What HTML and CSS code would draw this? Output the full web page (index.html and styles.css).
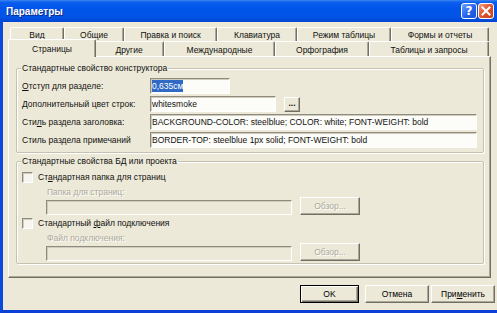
FILE: index.html
```html
<!DOCTYPE html>
<html lang="ru">
<head>
<meta charset="utf-8">
<title>Параметры</title>
<link rel="stylesheet" href="styles.css">
</head>
<body>
<div class="titlebar">
  <span class="title">Параметры</span>
  <div class="tb-buttons">
    <span class="tb-btn help">?</span>
    <span class="tb-btn close"><svg width="10" height="10" viewBox="0 0 10 10"><path d="M1.5 1.5 L8.5 8.5 M8.5 1.5 L1.5 8.5" stroke="#fff" stroke-width="2" stroke-linecap="square"/></svg></span>
  </div>
</div>
<div class="frame">
  <div class="tabs">
    <div class="tabrow back">
      <div class="tab w54">Вид</div>
      <div class="tab w60">Общие</div>
      <div class="tab w93">Правка и поиск</div>
      <div class="tab w80">Клавиатура</div>
      <div class="tab w94">Режим таблицы</div>
      <div class="tab w98">Формы и отчеты</div>
    </div>
    <div class="tabrow front">
      <div class="tab active w84">Страницы</div>
      <div class="tab w70">Другие</div>
      <div class="tab w111">Международные</div>
      <div class="tab w94">Орфография</div>
      <div class="tab w120">Таблицы и запросы</div>
    </div>
  </div>
  <div class="panel">
    <div class="group">
      <div class="group-title">Стандартные свойство конструктора</div>
      <div class="field first">
        <span class="lbl"><u>О</u>тступ для разделе:</span>
        <div class="edit e80"><span class="sel">0,635см</span></div>
      </div>
      <div class="field">
        <span class="lbl"><u>Д</u>ополнительный цвет строк:</span>
        <div class="edit e126">whitesmoke</div>
        <span class="btn dots">...</span>
      </div>
      <div class="field">
        <span class="lbl">Сти<u>л</u>ь раздела заголовка:</span>
        <div class="edit e327">BACKGROUND-COLOR: steelblue; COLOR: white; FONT-WEIGHT: bold</div>
      </div>
      <div class="field">
        <span class="lbl">Стиль раздела примечаний</span>
        <div class="edit e327">BORDER-TOP: steelblue 1px solid; FONT-WEIGHT: bold</div>
      </div>
    </div>
    <div class="group second">
      <div class="group-title">Стандартные свойства БД или проекта</div>
      <div class="check first">
        <span class="box"></span>
        <span>Ст<u>а</u>ндартная папка для страниц</span>
      </div>
      <div class="pathrow">
        <div class="pathcol">
          <span class="dis-lbl">Папка для страниц:</span>
          <div class="edit disabled e246"></div>
        </div>
        <span class="btn browse disabled-btn">Обзор...</span>
      </div>
      <div class="check">
        <span class="box"></span>
        <span>Стандартный <u>ф</u>айл подключения</span>
      </div>
      <div class="pathrow">
        <div class="pathcol">
          <span class="dis-lbl">Файл подключения:</span>
          <div class="edit disabled e246"></div>
        </div>
        <span class="btn browse disabled-btn">Обзор...</span>
      </div>
    </div>
  </div>
  <div class="footer">
    <span class="btn dlg default">OK</span>
    <span class="btn dlg cancel">Отмена</span>
    <span class="btn dlg apply">При<u>м</u>енить</span>
  </div>
</div>
</body>
</html>
```
FILE: styles.css
```css
* { box-sizing: border-box; }
html, body {
  margin: 0;
  padding: 0;
  width: 497px;
  height: 313px;
  overflow: hidden;
  background: #ECE9D8;
  font-family: "Liberation Sans", Arial, sans-serif;
  font-size: 8.5px;
  color: #000;
}
u { text-decoration: underline; text-underline-offset: 1px; }

.titlebar {
  height: 22px;
  display: flex;
  align-items: center;
  justify-content: space-between;
  padding: 0 3px 0 6px;
  background: linear-gradient(180deg, #3A86F4 0%, #0C5EEC 10%, #0055EA 35%, #0254E6 75%, #0046D4 100%);
}
.title {
  color: #fff;
  font-weight: bold;
  font-size: 10px;
  text-shadow: 1px 1px 0 #0A2A8A;
}
.tb-buttons { display: flex; gap: 1px; align-self: flex-start; margin-top: 3px; }
.tb-btn {
  width: 16px;
  height: 16px;
  border: 1px solid #fff;
  border-radius: 3px;
  display: flex;
  align-items: center;
  justify-content: center;
}
.help {
  background: linear-gradient(135deg, #6FA3FF, #2661EB 55%, #1A4FD8);
  color: #fff;
  font-weight: bold;
  font-size: 12px;
  font-family: "DejaVu Sans", sans-serif;
}
.close {
  background: linear-gradient(135deg, #F3A08A, #E2562F 45%, #C8401C);
}

.frame {
  height: 291px;
  border-left: 3px solid #0A4BDD;
  border-bottom: 3px solid #0B3FD6;
  padding: 5px 2px 0 5px;
  display: flex;
  flex-direction: column;
}

.tabs { margin: 0 6px 0 2px; height: 29px; }
.tabrow { display: flex; }
.tab {
  flex: none;
  display: flex;
  align-items: center;
  justify-content: center;
  background: #ECE9D8;
  border-top: 1px solid #fff;
  border-left: 1px solid #fff;
  border-right: 1px solid #716F64;
  box-shadow: inset -1px 0 0 #ACA899;
  border-radius: 2px 2px 0 0;
  white-space: nowrap;
  color: #111;
}
.back .tab { height: 14px; padding-top: 1px; }
.front .tab { height: 15px; padding-top: 1px; }
.tab.active {
  height: 18px;
  margin: -2px -2px 0 -2px;
  width: 88px;
  position: relative;
  z-index: 1;
  padding-top: 0;
}
.w54 { width: 54px; }
.w60 { width: 60px; }
.w70 { width: 70px; }
.w80 { width: 80px; }
.w84 { width: 84px; }
.w93 { width: 93px; }
.w94 { width: 94px; }
.w98 { width: 98px; }
.w111 { width: 111px; }
.w120 { width: 120px; }

.panel {
  height: 222px;
  margin-right: 4px;
  border-top: 1px solid #fff;
  border-left: 1px solid #fff;
  border-right: 1px solid #716F64;
  border-bottom: 1px solid #716F64;
  box-shadow: inset -1px -1px 0 #ACA899;
  padding: 11px 6px 0 7px;
}

.group {
  border: 1px solid #C5C2B2;
  border-radius: 2px;
  box-shadow: 1px 1px 0 #fff, inset 1px 1px 0 #fff;
  padding: 0 5px 3px 5px;
}
.group.second { margin-top: 8px; padding-bottom: 2px; }
.group-title {
  margin: -6px 0 0 -1px;
  height: 11px;
  line-height: 11px;
  padding: 0 1px;
  width: fit-content;
  background: #ECE9D8;
  color: #111;
}

.field { height: 18px; display: flex; align-items: center; color: #111; }
.field.first { margin-top: 3px; }
.lbl { width: 128px; flex: none; white-space: nowrap; }
.edit {
  height: 16px;
  line-height: 14px;
  padding: 0 1px;
  background: #FCFCF8;
  border: 1px solid;
  border-color: #8F8C7D #fff #fff #8F8C7D;
  box-shadow: inset 1px 1px 0 #CFCCBE;
  white-space: nowrap;
  overflow: hidden;
}
.e80 { width: 80px; }
.e126 { width: 126px; }
.e327 { width: 327px; }
.e246 { width: 246px; height: 15px; }
.edit.disabled { background: #ECE9D8; }
.sel { background: #316AC5; color: #fff; padding: 1px 0; }

.btn {
  display: flex;
  align-items: center;
  justify-content: center;
  background: #ECE9D8;
  border: 1px solid;
  border-color: #fff #716F64 #716F64 #fff;
  box-shadow: inset -1px -1px 0 #ACA899;
  white-space: nowrap;
}
.dots {
  width: 16px;
  height: 15px;
  margin-left: 8px;
  font-weight: bold;
  padding-bottom: 3px;
}

.check { height: 16px; display: flex; align-items: center; gap: 5px; color: #111; }
.check.first { margin-top: 2px; }
.box {
  width: 11px;
  height: 11px;
  border: 1px solid;
  border-color: #8F8C7D #fff #fff #8F8C7D;
  box-shadow: inset 1px 1px 0 #CFCCBE;
  background: #F6F5EF;
}

.pathrow { display: flex; align-items: flex-end; padding-left: 24px; }
.pathcol { display: flex; flex-direction: column; margin-top: 2px; }
.dis-lbl {
  height: 11px;
  line-height: 11px;
  margin-bottom: 2px;
  color: #ACA899;
  text-shadow: 1px 1px 0 #fff;
  padding-left: 1px;
}
.browse { width: 60px; height: 18px; margin-left: 8px; }
.disabled-btn { color: #ACA899; text-shadow: 1px 1px 0 #fff; }

.footer {
  margin-top: 7px;
  display: flex;
  justify-content: flex-end;
}
.dlg { height: 18px; }
.default {
  width: 59px;
  border: 1px solid #000;
  box-shadow: inset 1px 1px 0 #fff, inset -1px -1px 0 #716F64, inset -2px -2px 0 #ACA899;
}
.cancel { width: 64px; margin-left: 6px; }
.apply { width: 64px; margin-left: 2px; }
```
